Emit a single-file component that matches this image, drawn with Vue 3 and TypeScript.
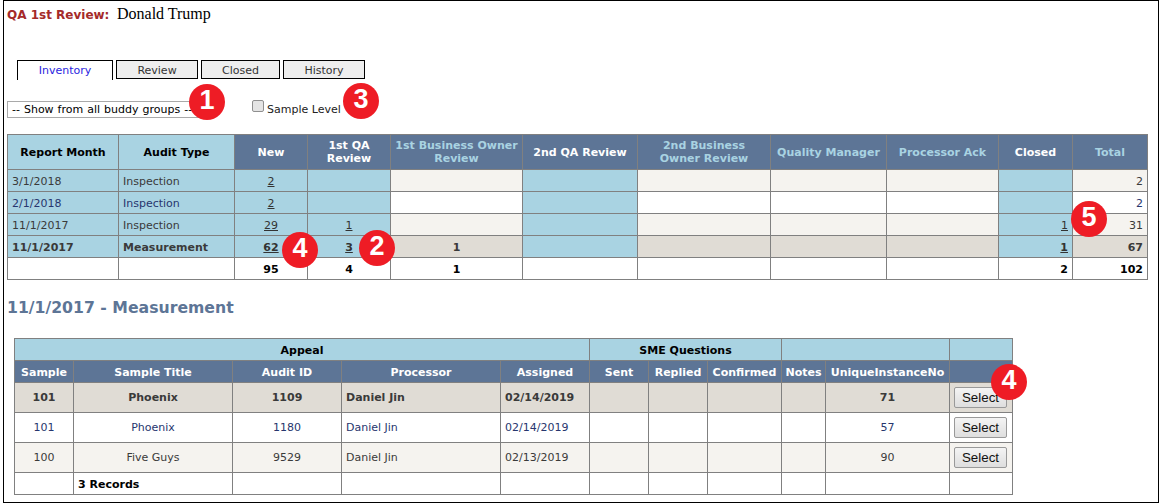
<script setup lang="ts">
interface Head { label: string; active: boolean; dark: boolean }
const summaryCols = [111, 116, 73, 83, 132, 115, 133, 116, 112, 74, 75]
const summaryHead: Head[] = [
  { label: 'Report Month', active: true, dark: false },
  { label: 'Audit Type', active: true, dark: false },
  { label: 'New', active: true, dark: true },
  { label: '1st QA Review', active: true, dark: true },
  { label: '1st Business Owner Review', active: false, dark: true },
  { label: '2nd QA Review', active: true, dark: true },
  { label: '2nd Business Owner Review', active: false, dark: true },
  { label: 'Quality Manager', active: false, dark: true },
  { label: 'Processor Ack', active: false, dark: true },
  { label: 'Closed', active: true, dark: true },
  { label: 'Total', active: false, dark: true },
]
const summaryRows = [
  { month: '3/1/2018', type: 'Inspection', fresh: '2', qa: '', biz: '', closed: '', total: '2', tone: 'odd' },
  { month: '2/1/2018', type: 'Inspection', fresh: '2', qa: '', biz: '', closed: '', total: '2', tone: 'even' },
  { month: '11/1/2017', type: 'Inspection', fresh: '29', qa: '1', biz: '', closed: '1', total: '31', tone: 'odd' },
  { month: '11/1/2017', type: 'Measurement', fresh: '62', qa: '3', biz: '1', closed: '1', total: '67', tone: 'sel' },
]
const detailCols = [59, 159, 109, 159, 89, 59, 59, 74, 44, 124, 63]
const detailHead = ['Sample', 'Sample Title', 'Audit ID', 'Processor', 'Assigned', 'Sent', 'Replied', 'Confirmed', 'Notes', 'UniqueInstanceNo', '']
const detailRows = [
  { sample: '101', title: 'Phoenix', audit: '1109', proc: 'Daniel Jin', date: '02/14/2019', uid: '71', tone: 'sel' },
  { sample: '101', title: 'Phoenix', audit: '1180', proc: 'Daniel Jin', date: '02/14/2019', uid: '57', tone: 'even' },
  { sample: '100', title: 'Five Guys', audit: '9529', proc: 'Daniel Jin', date: '02/13/2019', uid: '90', tone: 'odd' },
]
const tabs = ['Review', 'Closed', 'History']
</script>

<template>
  <div class="frame">
    <div class="title-row">
      <span class="qa">QA 1st Review:</span>
      <span class="who">Donald Trump</span>
    </div>

    <div class="tabs">
      <div class="tab current">Inventory</div>
      <div v-for="t in tabs" :key="t" class="tab" :class="t.toLowerCase()">{{ t }}</div>
    </div>

    <div class="filters">
      <div class="select">-- Show from all buddy groups --</div>
      <label class="sample">
        <span class="check"></span>
        <span>Sample Level</span>
      </label>
    </div>

    <table class="grid summary">
      <colgroup>
        <col v-for="(w, i) in summaryCols" :key="i" :style="{ width: w + 'px' }" />
      </colgroup>
      <thead>
        <tr>
          <th v-for="h in summaryHead" :key="h.label" :class="{ dark: h.dark, muted: !h.active }">{{ h.label }}</th>
        </tr>
      </thead>
      <tbody>
        <tr v-for="(r, i) in summaryRows" :key="i" :class="[r.tone]">
          <td class="blue left">{{ r.month }}</td>
          <td class="blue left">{{ r.type }}</td>
          <td class="blue center"><a>{{ r.fresh }}</a></td>
          <td class="blue center"><a>{{ r.qa }}</a></td>
          <td class="center">{{ r.biz }}</td>
          <td class="blue"></td>
          <td></td>
          <td></td>
          <td></td>
          <td class="blue right"><a>{{ r.closed }}</a></td>
          <td class="right">{{ r.total }}</td>
        </tr>
        <tr class="totals">
          <td></td>
          <td></td>
          <td class="center">95</td>
          <td class="center">4</td>
          <td class="center">1</td>
          <td></td>
          <td></td>
          <td></td>
          <td></td>
          <td class="right">2</td>
          <td class="right">102</td>
        </tr>
      </tbody>
    </table>

    <h2 class="section">11/1/2017 - Measurement</h2>

    <table class="grid detail">
      <colgroup>
        <col v-for="(w, i) in detailCols" :key="i" :style="{ width: w + 'px' }" />
      </colgroup>
      <thead>
        <tr>
          <th colspan="5">Appeal</th>
          <th colspan="3">SME Questions</th>
          <th colspan="2"></th>
          <th></th>
        </tr>
        <tr>
          <th v-for="(h, i) in detailHead" :key="i" class="dark">{{ h }}</th>
        </tr>
      </thead>
      <tbody>
        <tr v-for="(r, i) in detailRows" :key="i" class="tall" :class="[r.tone]">
          <td class="center">{{ r.sample }}</td>
          <td class="center">{{ r.title }}</td>
          <td class="center">{{ r.audit }}</td>
          <td class="left">{{ r.proc }}</td>
          <td class="left">{{ r.date }}</td>
          <td></td>
          <td></td>
          <td></td>
          <td></td>
          <td class="center">{{ r.uid }}</td>
          <td class="center"><button class="select-btn" type="button">Select</button></td>
        </tr>
        <tr class="totals">
          <td></td>
          <td class="left">3 Records</td>
          <td></td>
          <td></td>
          <td></td>
          <td></td>
          <td></td>
          <td></td>
          <td></td>
          <td></td>
          <td></td>
        </tr>
      </tbody>
    </table>

    <span class="badge b1">1</span>
    <span class="badge b3">3</span>
    <span class="badge b2">2</span>
    <span class="badge b4a">4</span>
    <span class="badge b5">5</span>
    <span class="badge b4b">4</span>
  </div>
</template>

<style>
html, body { margin: 0; background: #fff; }
</style>

<style scoped>
.frame {
  position: relative;
  box-sizing: border-box;
  width: 1156px;
  height: 503px;
  margin-left: 3px;
  border: 1px solid #000;
  padding: 0 0 0 3px;
  font-family: "DejaVu Sans", Verdana, sans-serif;
  font-size: 11px;
  color: #3a3a3a;
  overflow: hidden;
}
.title-row { display: flex; align-items: baseline; height: 59px; padding-top: 4px; box-sizing: border-box; }
.qa { font-size: 12px; font-weight: bold; color: #a52a2a; width: 110px; }
.who { font-family: "Liberation Serif", serif; font-size: 16px; color: #000; }
.tabs { display: flex; gap: 3px; padding-left: 10px; height: 20px; align-items: flex-start; }
.tab {
  box-sizing: border-box;
  height: 19px;
  border: 1px solid #000;
  background: #eee;
  text-align: center;
  line-height: 19px;
  width: 82px;
  color: #333;
}
.tab.current { width: 96px; height: 20px; background: #fff; border-bottom: 0; color: #2a1ee0; }
.tab.closed { width: 79px; }
.filters { display: flex; align-items: center; height: 18px; margin-top: 20px; }
.select {
  box-sizing: border-box;
  width: 200px;
  height: 17px;
  border: 1px solid #a9a9a9;
  line-height: 15px;
  padding-left: 4px;
  color: #000;
  white-space: nowrap;
  overflow: hidden;
  word-spacing: 0.5px;
}
.sample { display: flex; align-items: center; margin-left: 45px; color: #222; }
.check {
  box-sizing: border-box;
  width: 12px;
  height: 12px;
  margin-right: 3px;
  margin-top: -7px;
  border: 1px solid #8f8f8f;
  border-radius: 2px;
  background: #e4e4e4;
}
.grid {
  border-collapse: collapse;
  table-layout: fixed;
}
.grid th, .grid td {
  border: 1px solid #808080;
  padding: 0;
  box-sizing: border-box;
  height: 22px;
  overflow: hidden;
}
.grid td { padding-top: 1px; }
.grid .tall td { padding-top: 0; }
.grid th { background: #a9d3e2; color: #000; font-weight: bold; text-align: center; line-height: 13px; }
.grid th.dark { background: #5d7596; color: #fff; }
.grid th.dark.muted { color: #a9d3e2; }
.summary { width: 1140px; margin-top: 16px; }
.summary thead th { height: 35px; padding: 0 4px; }
.detail { width: 998px; margin: 20px 0 0 7px; }
.detail thead th { padding-top: 1px; }
.left { text-align: left; padding-left: 4px !important; }
.center { text-align: center; }
.right { text-align: right; padding-right: 4px !important; }
.grid a { text-decoration: underline; color: #333; }
.odd td { background: #f5f3ef; }
.even td { background: #fff; color: #27366e; }
.sel td { background: #e0dcd5; font-weight: bold; }
.grid td.blue { background: #a9d3e2; }
.totals td { background: #fff; color: #000; font-weight: bold; }
.tall td { height: 30px; }
.section {
  margin: 18px 0 0;
  height: 20px;
  line-height: 20px;
  font-size: 15.7px;
  font-weight: bold;
  color: #5d7596;
}
.select-btn {
  box-sizing: border-box;
  display: block;
  width: 53px;
  height: 21px;
  margin: 0 0 0 4px;
  padding: 0;
  border: 1px solid #999;
  border-radius: 2px;
  background: linear-gradient(#f4f4f4, #dedede);
  font-family: "Liberation Sans", Arial, sans-serif;
  font-size: 13.33px;
  font-weight: normal;
  color: #111;
}
.badge {
  position: absolute;
  width: 36px;
  height: 36px;
  margin: -18px 0 0 -18px;
  border-radius: 50%;
  background: #ee1c25;
  color: #fff;
  font-family: "Liberation Sans", Arial, sans-serif;
  font-size: 27px;
  font-weight: bold;
  line-height: 33px;
  text-align: center;
}
.b1 { left: 203px; top: 101px; }
.b3 { left: 357px; top: 100px; }
.b2 { left: 373px; top: 247px; }
.b4a { left: 296px; top: 249px; }
.b5 { left: 1085px; top: 218px; }
.b4b { left: 1005px; top: 381px; }
</style>
